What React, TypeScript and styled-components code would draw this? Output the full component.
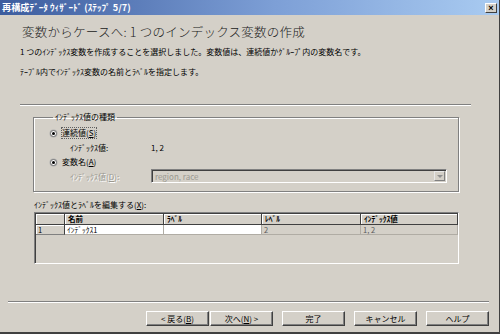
import * as React from 'react';
import styled, { createGlobalStyle } from 'styled-components';

const GlobalStyle = createGlobalStyle`
    html, body {
        margin: 0;
        padding: 0;
        background: #d4d0c8;
    }
`;

const Window = styled.div`
    width: 500px;
    height: 334px;
    box-sizing: border-box;
    display: flex;
    flex-direction: column;
    background: #d4d0c8;
    border-right: 1px solid #404040;
    border-bottom: 2px solid #404040;
    font-family: "Noto Sans CJK JP", "Liberation Sans", sans-serif;
    font-size: 8px;
    color: #000;
    overflow: hidden;
`;

const TitleBar = styled.div`
    height: 15px;
    flex: none;
    display: flex;
    align-items: center;
    justify-content: space-between;
    padding: 0 2px 0 2px;
    background: linear-gradient(to right, #3c5c9e, #7d9fd6 55%, #a9cbf1);
`;

const TitleText = styled.span`
    color: #fff;
    font-weight: bold;
    font-size: 9.2px;
    line-height: 15px;
    white-space: nowrap;
`;

const CloseButton = styled.div`
    width: 12px;
    height: 10px;
    box-sizing: border-box;
    display: flex;
    align-items: center;
    justify-content: center;
    background: #d4d0c8;
    border: 1px solid;
    border-color: #fff #404040 #404040 #fff;
    font-family: "Liberation Sans", sans-serif;
    font-size: 9px;
    font-weight: bold;
    line-height: 8px;
`;

const Content = styled.div`
    padding: 0 28px 0 20px;
    display: flex;
    flex-direction: column;
`;

const Heading = styled.div`
    margin-top: 9px;
    margin-left: 2px;
    height: 16px;
    line-height: 16px;
    font-size: 12.5px;
    font-weight: 300;
    letter-spacing: 0.25px;
    color: #202020;
    white-space: nowrap;
`;

const Text = styled.div<{ $top: number }>`
    margin-top: ${(p) => p.$top}px;
    height: 10px;
    line-height: 10px;
    white-space: nowrap;
`;

const Separator = styled.div<{ $top: number }>`
    margin-top: ${(p) => p.$top}px;
    height: 1px;
    background: #808080;
    border-bottom: 1px solid #fff;
    flex: none;
`;

const GroupBox = styled.fieldset`
    margin: 6px 12px 0 13px;
    padding: 0 0 8px 16px;
    border: 1px solid #808080;
    box-shadow: inset 1px 1px 0 #fff, 1px 1px 0 #fff;
    min-width: 0;
`;

const Legend = styled.legend`
    padding: 0 2px;
    margin-left: 3px;
    height: 10px;
    line-height: 10px;
`;

const OptionRow = styled.div<{ $top: number }>`
    margin-top: ${(p) => p.$top}px;
    height: 10px;
    display: flex;
    align-items: center;
    gap: 5px;
`;

const Radio = styled.span`
    width: 7px;
    height: 7px;
    box-sizing: border-box;
    border-radius: 50%;
    background: #fff;
    border: 1px solid #707070;
    box-shadow: 0 0 0 0.5px #b0b0b0;
    display: flex;
    align-items: center;
    justify-content: center;
    &::after {
        content: '';
        width: 3px;
        height: 3px;
        border-radius: 50%;
        background: #000;
    }
`;

const OptionLabel = styled.span<{ $focus?: boolean }>`
    line-height: 10px;
    outline: ${(p) => (p.$focus ? '1px dotted #606060' : 'none')};
`;

const SubRow = styled.div<{ $top: number; $height?: number }>`
    margin-top: ${(p) => p.$top}px;
    height: ${(p) => p.$height ?? 10}px;
    padding-left: 20px;
    display: grid;
    grid-template-columns: 81px 1fr;
    align-items: center;
`;

const SubLabel = styled.span<{ $disabled?: boolean }>`
    color: ${(p) => (p.$disabled ? '#9a9890' : '#000')};
    text-shadow: ${(p) => (p.$disabled ? '1px 1px 0 #fff' : 'none')};
`;

const Combo = styled.div`
    width: 296px;
    height: 14px;
    box-sizing: border-box;
    display: flex;
    align-items: center;
    justify-content: space-between;
    border: 1px solid;
    border-color: #808080 #fff #fff #808080;
    box-shadow: inset 1px 1px 0 #404040;
    padding: 0 1px 0 3px;
    color: #9a9890;
`;

const ComboArrow = styled.span`
    width: 11px;
    height: 10px;
    box-sizing: border-box;
    background: #d4d0c8;
    border: 1px solid;
    border-color: #e8e8e8 #808080 #808080 #e8e8e8;
    display: flex;
    align-items: center;
    justify-content: center;
    &::after {
        content: '';
        border-left: 3px solid transparent;
        border-right: 3px solid transparent;
        border-top: 3px solid #909090;
    }
`;

const GridLabel = styled.div`
    margin: 8px 0 0 14px;
    height: 10px;
    line-height: 10px;
`;

const Grid = styled.div`
    margin: 2px 12px 0 14px;
    height: 52px;
    box-sizing: border-box;
    border: 1px solid;
    border-color: #808080 #fff #fff #808080;
    box-shadow: inset 1px 1px 0 #404040;
    padding: 1px 0 0 1px;
    display: grid;
    grid-template-columns: 29px 99px 98px 99px 1fr;
    grid-auto-rows: 11px 10px;
    align-content: start;
`;

const HeadCell = styled.div`
    box-sizing: border-box;
    background: #d4d0c8;
    border-right: 1px solid #404040;
    border-bottom: 1px solid #404040;
    box-shadow: inset 1px 1px 0 #fff;
    padding-left: 3px;
    font-weight: bold;
    font-size: 7.5px;
    line-height: 10px;
    white-space: nowrap;
`;

const Cell = styled.div<{ $readOnly?: boolean }>`
    box-sizing: border-box;
    background: ${(p) => (p.$readOnly ? '#d4d0c8' : '#fff')};
    color: ${(p) => (p.$readOnly ? '#5a5a5a' : '#000')};
    border-right: 1px solid #b0aca4;
    border-bottom: 1px solid #b0aca4;
    padding-left: 2px;
    font-size: 7.5px;
    line-height: 9px;
    white-space: nowrap;
`;

const RowHead = styled(Cell)`
    background: #d4d0c8;
    border-right: 1px solid #404040;
    border-bottom: 1px solid #808080;
    box-shadow: inset 1px 1px 0 #fff;
`;

const Footer = styled.div`
    margin-top: auto;
    padding: 0 10px 6px 8px;
    display: flex;
    flex-direction: column;
`;

const ButtonRow = styled.div`
    margin-top: 8px;
    display: flex;
    justify-content: flex-end;
    gap: 9px;
`;

const ButtonPair = styled.div`
    display: flex;
    gap: 1px;
`;

const Button = styled.div`
    width: 63px;
    height: 15px;
    box-sizing: border-box;
    background: #d4d0c8;
    border: 1px solid;
    border-color: #fff #404040 #404040 #fff;
    box-shadow: inset -1px -1px 0 #808080;
    display: flex;
    align-items: center;
    justify-content: center;
    line-height: 10px;
    white-space: nowrap;
`;

const Underline = styled.u`
    text-underline-offset: 1px;
`;

export default function App() {
    const columns = ['名前', 'ﾗﾍﾞﾙ', 'ﾚﾍﾞﾙ', 'ｲﾝﾃﾞｯｸｽ値'];
    return (
        <Window>
            <GlobalStyle />
            <TitleBar>
                <TitleText>再構成ﾃﾞｰﾀ ｳｨｻﾞｰﾄﾞ (ｽﾃｯﾌﾟ 5/7)</TitleText>
                <CloseButton>×</CloseButton>
            </TitleBar>
            <Content>
                <Heading>変数からケースへ: 1 つのインデックス変数の作成</Heading>
                <Text $top={7}>1 つのｲﾝﾃﾞｯｸｽ変数を作成することを選択しました。変数値は、連続値かｸﾞﾙｰﾌﾟ内の変数名です。</Text>
                <Text $top={10}>ﾃｰﾌﾞﾙ内でｲﾝﾃﾞｯｸｽ変数の名前とﾗﾍﾞﾙを指定します。</Text>
                <Separator $top={27} />
                <GroupBox>
                    <Legend>ｲﾝﾃﾞｯｸｽ値の種類</Legend>
                    <OptionRow $top={6}>
                        <Radio />
                        <OptionLabel $focus>連続値(<Underline>S</Underline>)</OptionLabel>
                    </OptionRow>
                    <SubRow $top={4}>
                        <SubLabel>ｲﾝﾃﾞｯｸｽ値:</SubLabel>
                        <span>1, 2</span>
                    </SubRow>
                    <OptionRow $top={5}>
                        <Radio />
                        <OptionLabel>変数名(<Underline>A</Underline>)</OptionLabel>
                    </OptionRow>
                    <SubRow $top={2} $height={14}>
                        <SubLabel $disabled>ｲﾝﾃﾞｯｸｽ値(<Underline>D</Underline>):</SubLabel>
                        <Combo>
                            <span>region, race</span>
                            <ComboArrow />
                        </Combo>
                    </SubRow>
                </GroupBox>
                <GridLabel>ｲﾝﾃﾞｯｸｽ値とﾗﾍﾞﾙを編集する(<Underline>X</Underline>):</GridLabel>
                <Grid>
                    <HeadCell />
                    {columns.map((c) => (
                        <HeadCell key={c}>{c}</HeadCell>
                    ))}
                    <RowHead>1</RowHead>
                    <Cell>ｲﾝﾃﾞｯｸｽ1</Cell>
                    <Cell />
                    <Cell $readOnly>2</Cell>
                    <Cell $readOnly>1, 2</Cell>
                </Grid>
            </Content>
            <Footer>
                <Separator $top={0} />
                <ButtonRow>
                    <ButtonPair>
                        <Button>&lt; 戻る(<Underline>B</Underline>)</Button>
                        <Button>次へ(<Underline>N</Underline>) &gt;</Button>
                    </ButtonPair>
                    <Button>完了</Button>
                    <Button>キャンセル</Button>
                    <Button>ヘルプ</Button>
                </ButtonRow>
            </Footer>
        </Window>
    );
}
